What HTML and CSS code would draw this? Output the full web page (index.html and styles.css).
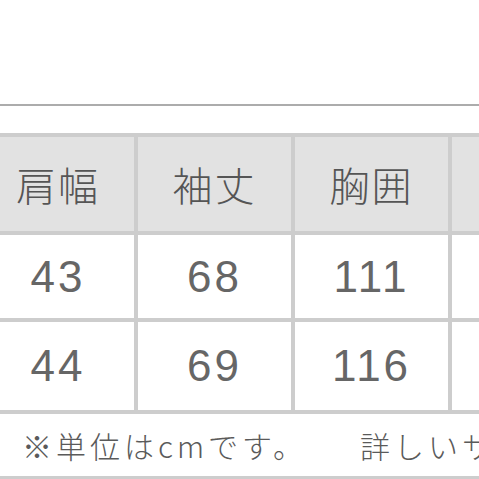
FILE: index.html
```html
<!DOCTYPE html>
<html lang="ja">
<head>
<meta charset="utf-8">
<link rel="stylesheet" href="styles.css">
</head>
<body>
<div class="page">
  <div class="rule"></div>
  <div class="size-table">
    <div class="cell head">肩幅</div>
    <div class="cell head">袖丈</div>
    <div class="cell head">胸囲</div>
    <div class="cell head">着丈</div>
    <div class="cell num">43</div>
    <div class="cell num">68</div>
    <div class="cell num">111</div>
    <div class="cell num">70</div>
    <div class="cell num">44</div>
    <div class="cell num">69</div>
    <div class="cell num">116</div>
    <div class="cell num">72</div>
    <div class="cell note">※単位はcmです。　　詳しいサイズは商品ページをご覧ください。</div>
  </div>
</div>
</body>
</html>
```

FILE: styles.css
```css
html, body {
  margin: 0;
  padding: 0;
  background: #ffffff;
  overflow: hidden;
}

.page {
  width: 479px;
  height: 479px;
  overflow: hidden;
  padding-top: 104px;
  box-sizing: border-box;
}

.rule {
  height: 2px;
  background: #acacac;
  margin-bottom: 27px;
}

.size-table {
  margin-left: -22px;
  width: 632px;
  display: grid;
  grid-template-columns: 152px 153px 153px 154px;
  grid-template-rows: 94px 83px 88px 62px;
  gap: 4px;
  padding: 4px;
  background: #cdcdcd;
  font-family: "Noto Sans CJK JP", sans-serif;
  color: #5a5a5a;
}

.cell {
  display: flex;
  align-items: center;
  justify-content: center;
  background: #ffffff;
  white-space: nowrap;
  overflow: hidden;
}

.head {
  background: #e2e2e2;
  font-size: 40px;
  font-weight: 300;
  letter-spacing: 2px;
  color: #555555;
}

.num {
  font-family: "Liberation Sans", "Noto Sans CJK JP", sans-serif;
  font-size: 44px;
  font-weight: 400;
  letter-spacing: 3px;
  color: #666666;
}

.note {
  grid-column: 1 / -1;
  justify-content: flex-start;
  padding-left: 40px;
  font-size: 30px;
  font-weight: 300;
  letter-spacing: 4px;
  color: #5a5a5a;
}
```
